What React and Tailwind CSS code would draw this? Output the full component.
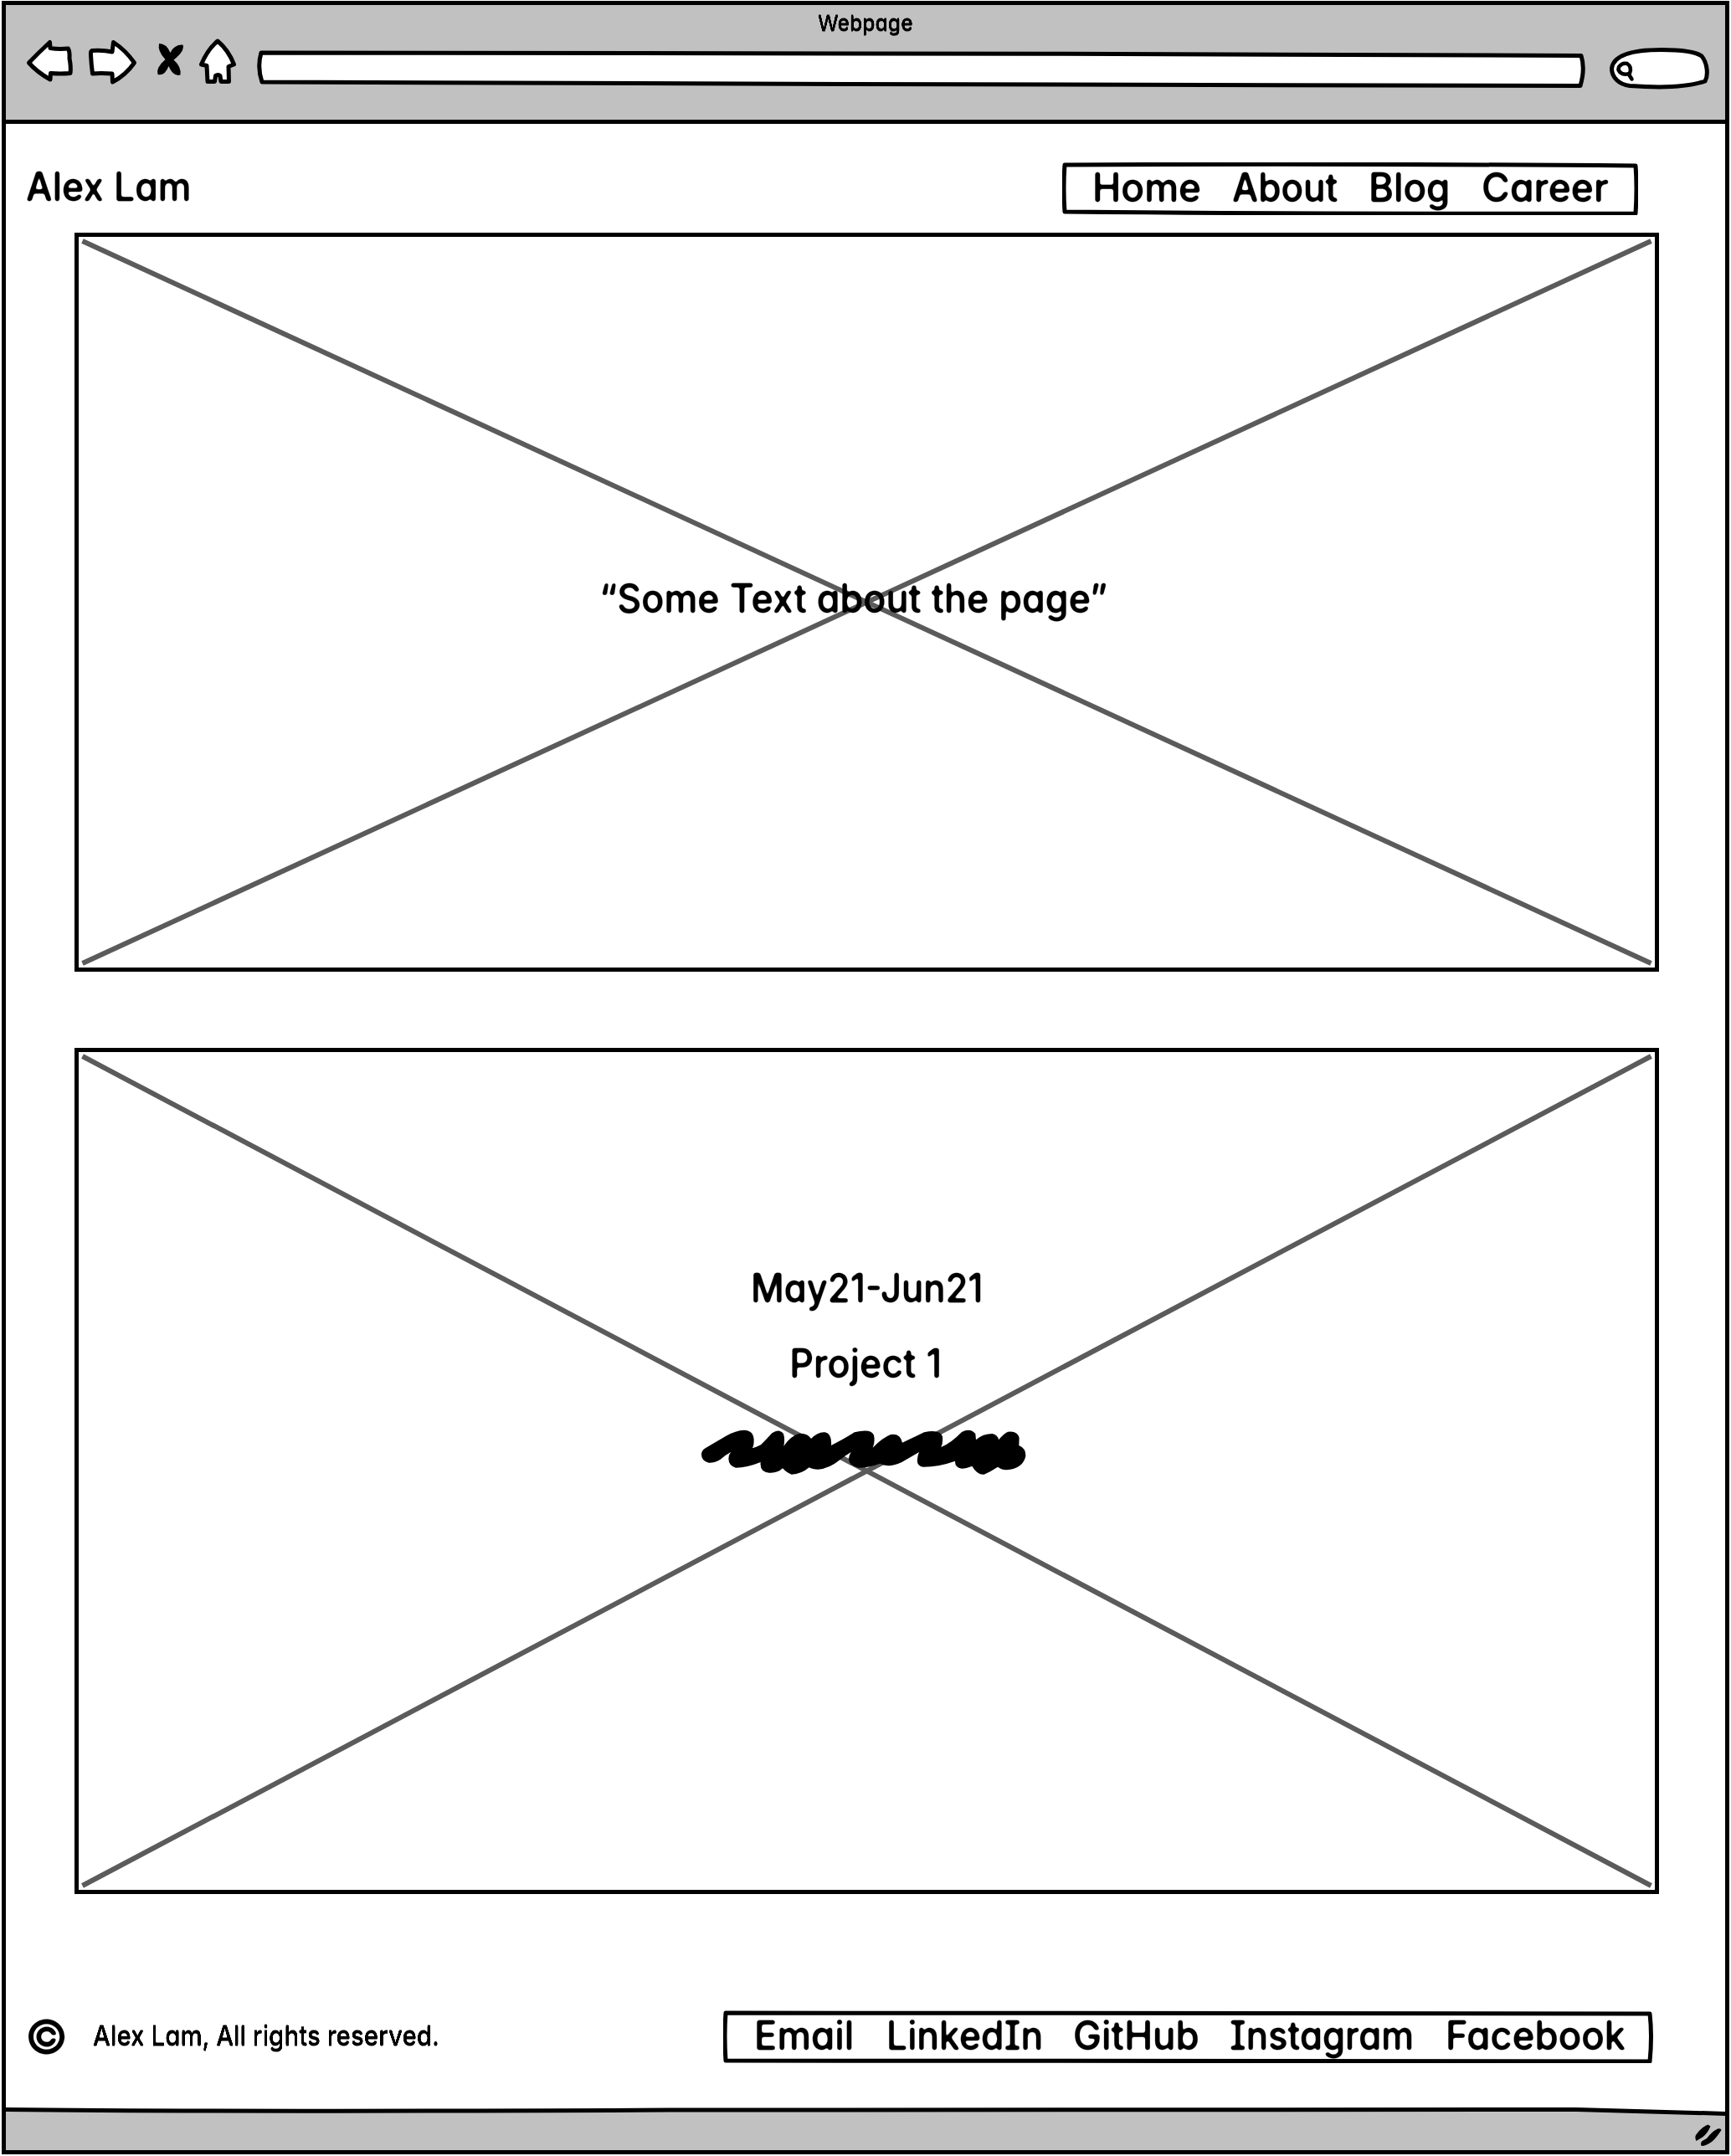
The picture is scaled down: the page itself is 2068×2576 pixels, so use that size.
const INK = "block shrink-0 font-['Inter',sans-serif] whitespace-nowrap text-black [font-feature-settings:'cv11','cv08']";

function Label({ className = "", weight = "font-medium", small = false, children }) {
  return (
    <span className={`${INK} ${weight} ${small ? "[filter:url(#ink-sm)]" : "[filter:url(#ink)]"} ${className}`}>
      {children}
    </span>
  );
}

/* Rounds the corners of glyph strokes so they read as marker lettering. */
function InkFilter() {
  return (
    <svg className="absolute h-0 w-0" aria-hidden="true">
      <filter id="ink" x="-5%" y="-20%" width="110%" height="140%">
        <feGaussianBlur stdDeviation="1.5" />
        <feComponentTransfer>
          <feFuncA type="linear" slope="3.4" intercept="-0.9" />
        </feComponentTransfer>
      </filter>
      <filter id="ink-sm" x="-5%" y="-20%" width="110%" height="140%">
        <feGaussianBlur stdDeviation="0.8" />
        <feComponentTransfer>
          <feFuncA type="linear" slope="3" intercept="-0.5" />
        </feComponentTransfer>
      </filter>
    </svg>
  );
}

function Toolbar() {
  return (
    <header className="flex h-[142px] shrink-0 flex-col border-b-[5px] border-black bg-[#c1c1c1]">
      <div className="flex h-[29px] items-end justify-center">
        <Label small className="scale-x-[0.95] text-[26px] leading-[15px]">Webpage</Label>
      </div>
      <div className="flex h-[76px] items-start pt-[10px] pl-[24px]">
        <svg className="h-[60px] w-[60px] shrink-0" viewBox="31 45 60 60" fill="white" stroke="black" strokeWidth="5" strokeLinejoin="round">
          <path d="M34.5 75Q47 62 59.5 50.5L60 57.5Q70 59 81.5 58Q83.5 62 83 70Q85 80 84 87.5Q72 88.5 60.5 87.5L60 95Q44 86 34.5 75Z" />
        </svg>
        <svg className="ml-[11px] h-[60px] w-[66px] shrink-0" viewBox="102 45 66 60" fill="white" stroke="black" strokeWidth="5" strokeLinejoin="round">
          <path d="M110 60.5Q123 59.500 134 62L135.500 50.500Q150 60 160.500 75Q150 90 134.500 98L134 88Q120 87 110.500 88Q109 76 108.500 66Q108 61 110 60.500Z" />
        </svg>
        <svg className="ml-[16px] h-[60px] w-[44px] shrink-0" viewBox="184 45 44 60">
          <path d="M190 52Q199 52 203.500 63Q208 53 218.500 53.500Q221 61 207.500 71.500Q217 80 215.500 89.500Q207 92 201.500 79Q197 91 188.500 89Q186 81 197.500 71Q188 61 190 52Z" />
        </svg>
        <svg className="ml-[6px] h-[60px] w-[54px] shrink-0" viewBox="234 45 54 60" fill="white" stroke="black" strokeWidth="5" strokeLinejoin="round">
          <path d="M260 49Q273 60 279.500 77L273 79.500L273.500 97.500L264 97.500L263 90.500Q260 88.500 257.500 90.500L256.500 97.500L248 97.500L247 78.500L240.500 77Q248 59 260 49Z" />
        </svg>
        <svg className="ml-[15px] h-[60px] w-[1600px] shrink-0" viewBox="303 45 1600 60" fill="white" stroke="black" strokeWidth="5" strokeLinejoin="round">
          <path d="M312 63C600 63 1400 64 1889 66.500Q1894 82 1888 102.500L1010 100.500Q700 98.500 313 98Q307 80 312 63Z" />
        </svg>
        <svg className="ml-[15px] h-[64px] w-[130px] shrink-0" viewBox="1918 45 130 64" fill="none" stroke="black" strokeWidth="5" strokeLinecap="round">
          <path fill="white" d="M1947 102.500C1934 101 1925.500 92 1925.500 82C1927 68 1945 59.500 1985 59.500C2010 59.500 2026 62 2033 67C2040 76 2041 90 2037 97C2020 103 1995 106 1947 102.500Z" />
          <path strokeWidth="4.500" d="M1938 88Q1932 85 1934 80Q1938 74.500 1944 76Q1950 80 1947 87.500Q1943 89.500 1938 88ZM1946 89L1949.500 94.500" />
        </svg>
      </div>
    </header>
  );
}

function Placeholder({ w, h, className, children }) {
  return (
    <section className={`relative ml-[82px] flex w-[1893px] shrink-0 flex-col items-center border-[5px] border-black ${className}`}>
      <svg className="absolute inset-0 h-full w-full" viewBox={`0 0 ${w} ${h}`} stroke="#5b5b5d" strokeWidth="6">
        <path d={`M4.500 5L${w - 4.5} ${h - 5}M4.500 ${h - 5}L${w - 4.5} 5`} />
      </svg>
      {children}
    </section>
  );
}

function NavBox({ className, border, box, links }) {
  return (
    <nav className={`relative flex h-[63px] shrink-0 ${className}`}>
      <svg className="absolute inset-0 h-full w-full" viewBox={box} fill="none" stroke="black" strokeWidth="5" strokeLinejoin="round">
        <path d={border} />
      </svg>
      {links.map(([text, size]) => (
        <div key={text} className={`flex shrink-0 ${size[0]}`}>
          <Label className={`origin-left text-[48px] leading-[59px] ${size[1]}`}>{text}</Label>
        </div>
      ))}
    </nav>
  );
}

const PAGES = [
  ["Home", ["w-[167px]", "scale-x-[0.96]"]],
  ["About", ["w-[163px]", "scale-x-[0.918]"]],
  ["Blog", ["w-[135px]", "scale-x-[0.952]"]],
  ["Career", ["w-[154px]", "scale-x-[0.965]"]],
];

const SOCIAL = [
  ["Email", ["w-[158px]", "scale-x-[0.95]"]],
  ["LinkedIn", ["w-[223px]", "scale-x-[0.926]"]],
  ["GitHub", ["w-[187px]", "scale-x-[0.95]"]],
  ["Instagram", ["w-[258px]", "scale-x-[0.91]"]],
  ["Facebook", ["w-[216px]", "scale-x-[0.95]"]],
];

export default function App() {
  return (
    <div className="h-[2576px] w-[2068px] overflow-hidden bg-white pt-[1px] pl-[2px]">
      <InkFilter />
      <div className="flex h-[2573px] w-[2064px] flex-col border-[5px] border-black">
        <Toolbar />
        <div className="flex h-[130px] shrink-0 items-start pt-[46px] pl-[24px]">
          <div className="flex w-[1238px] shrink-0">
            <Label className="origin-left scale-x-[0.93] text-[48px] leading-[57px]">Alex Lam</Label>
          </div>
          <NavBox
            className="w-[688px] pl-[36px]"
            box="0 0 688 63"
            border="M3 3Q300 1 685 4Q687 30 685 61Q300 62 3 59Q1 30 3 3Z"
            links={PAGES}
          />
        </div>
        <Placeholder w={1883} h={873} className="h-[883px] justify-center pr-[32px] pb-[10px]">
          <Label className="relative scale-x-[0.935] text-[48px] leading-[59px]">“Some Text about the page”</Label>
        </Placeholder>
        <Placeholder w={1883} h={1001} className="mt-[91px] h-[1011px] pt-[257px]">
          <Label className="relative scale-x-[0.908] text-[48px] leading-[49px]">May21-Jun21</Label>
          <Label className="relative mt-[41px] mr-[2px] scale-x-[0.935] text-[48px] leading-[49px]">Project 1</Label>
          <svg className="relative mt-[50px] mr-[4px] h-[60px] w-[400px]" viewBox="40 610 1200 180">
            <path d="M52 715Q52 700 66 692L140 648Q175 628 205 627Q240 628 240 665Q240 685 234 692Q250 688 265 680Q285 660 305 638Q330 620 346 640Q352 660 347 684Q370 650 400 640Q430 636 445 658Q470 632 495 635Q520 640 517 682Q570 655 600 635Q660 620 670 645Q675 670 666 690Q700 655 730 643Q765 638 772 672Q820 650 850 635Q905 622 916 650Q918 675 911 688Q945 675 985 634Q1015 618 1034 640L1036 662Q1060 640 1095 640Q1115 645 1117 662Q1135 640 1150 633Q1185 628 1191 655L1190 682Q1215 692 1214 720Q1205 765 1145 770Q1125 768 1114 759Q1090 775 1065 786Q1040 788 1022 756Q1000 765 985 765Q960 762 961 738Q900 760 845 759Q822 755 826 730Q828 715 832 706Q800 725 770 742Q740 755 722 755Q705 753 692 747Q650 762 615 762Q580 755 580 730Q582 715 588 706Q565 720 545 736Q510 765 470 768Q450 768 438 761Q410 785 375 786Q360 782 343 764Q325 782 295 780Q260 778 264 742Q215 762 175 762Q150 755 149 730Q150 715 157 706Q140 715 120 732Q100 745 78 744Q52 738 52 715Z" />
          </svg>
        </Placeholder>
        <footer className="flex h-[251px] shrink-0 items-start pt-[139px] pl-[23px]">
          <div className="flex w-[81px] shrink-0">
            <Label small weight="font-normal" className="text-[56px] leading-[65px]">©</Label>
          </div>
          <Label small className="origin-left scale-x-[0.923] text-[32px] leading-[61px]">Alex Lam, All rights reserved.</Label>
          <NavBox
            className="mr-[86px] ml-auto w-[1111px] pl-[37px]"
            box="0 0 1111 63"
            border="M3 3Q600 2 1107 4Q1110 30 1107 61Q600 62 3 60Q1 30 3 3Z"
            links={SOCIAL}
          />
        </footer>
        <svg className="h-[55px] w-[2054px] shrink-0" viewBox="7 2514 2054 55">
          <path fill="#c1c1c1" d="M7 2520.500Q250 2523.500 800 2521L1883 2520.500L2061 2525.500V2569H7Z" />
          <path fill="none" stroke="black" strokeWidth="5" d="M4 2520.500Q250 2523.500 800 2521L1883 2520.500L2064 2525.500" />
          <path d="M2040.500 2538.500L2043.500 2540.500Q2040 2549 2034 2553.500L2026.500 2558Q2024.500 2554 2026 2551Q2032 2542 2040.500 2538.500ZM2052 2543.500Q2056 2542.500 2056.500 2545Q2050 2555 2045 2559Q2038 2564 2033 2564Q2031 2562 2033 2558.500L2039 2555Q2045 2547 2052 2543.500Z" />
        </svg>
      </div>
    </div>
  );
}
